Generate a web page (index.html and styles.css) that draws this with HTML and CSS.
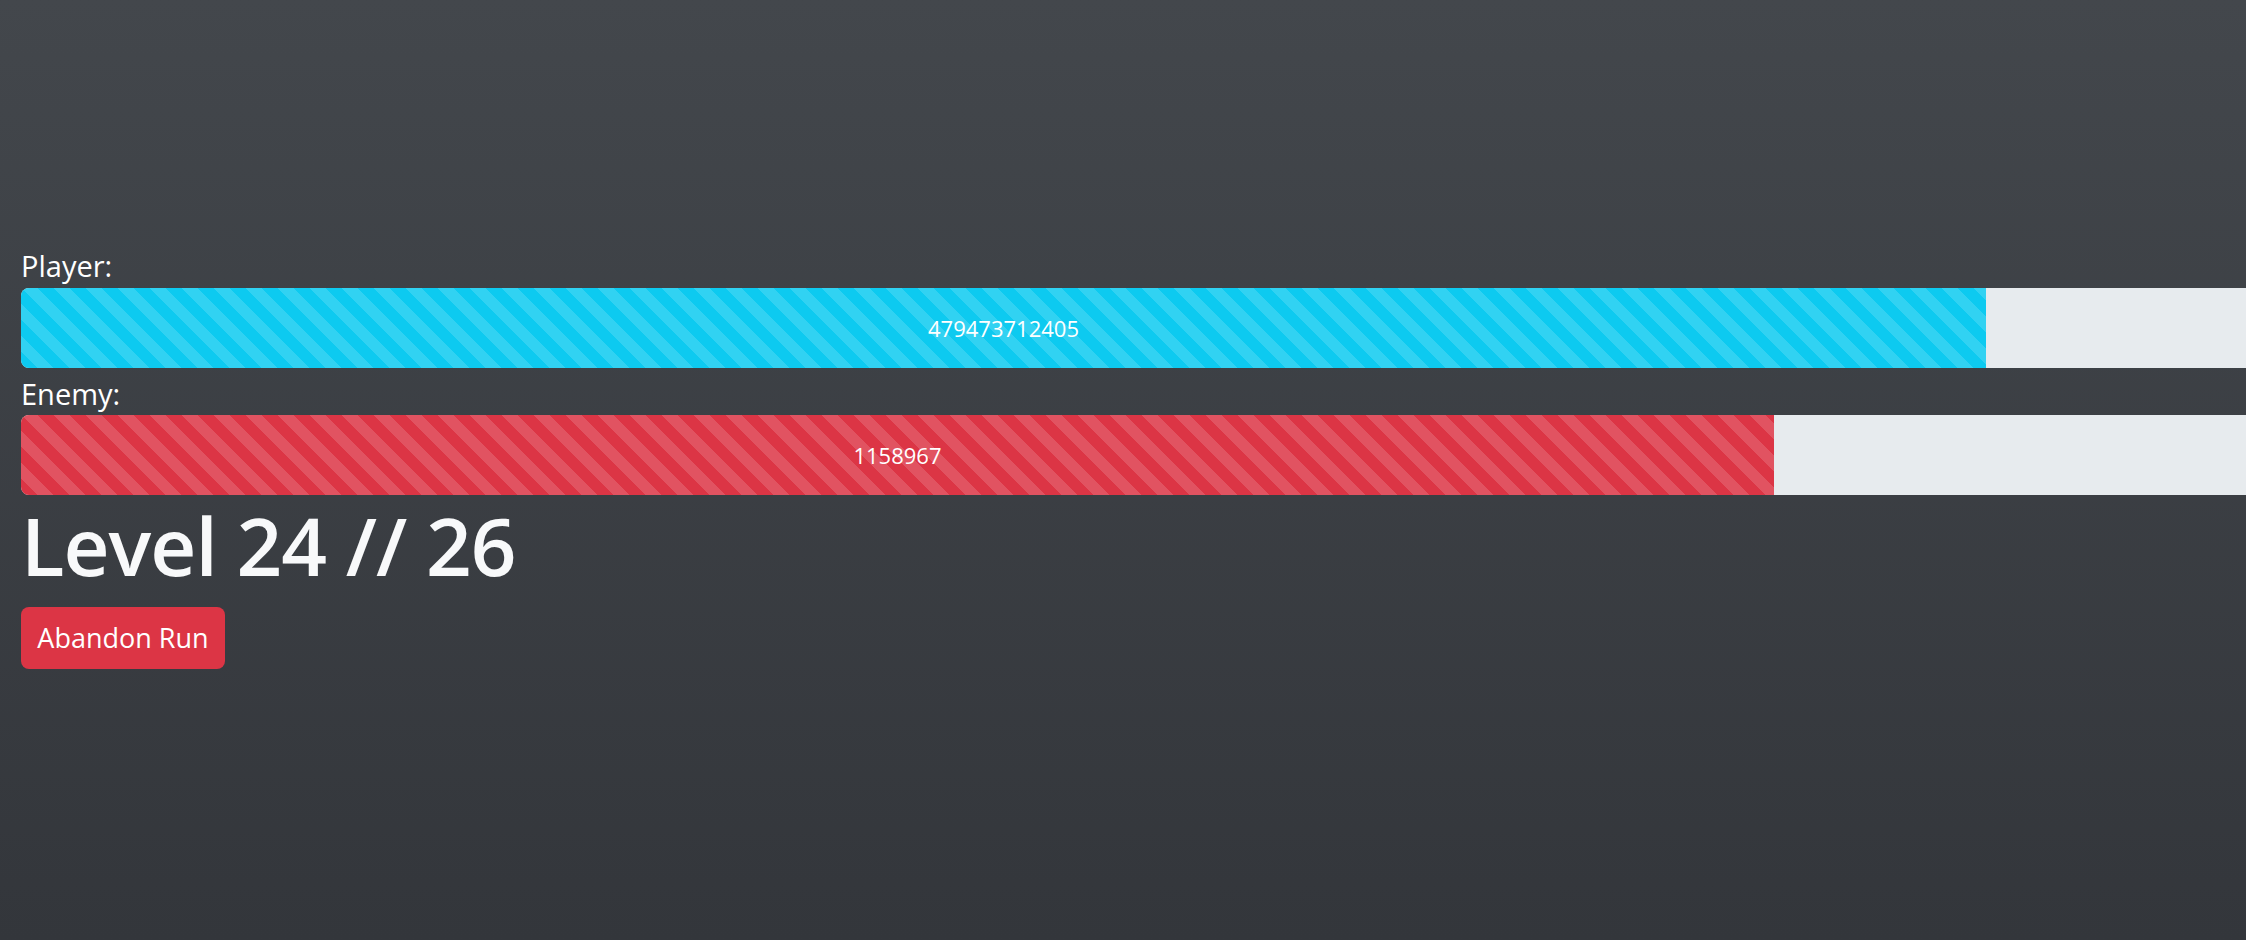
FILE: index.html
```html
<!DOCTYPE html>
<html lang="en">
<head>
<meta charset="utf-8">
<title>Run</title>
<link rel="stylesheet" href="styles.css">
</head>
<body>
<main class="game">
  <section class="meter">
    <div class="meter-label">Player:</div>
    <div class="track">
      <div class="fill fill-info" style="width: 88%">479473712405</div>
    </div>
  </section>
  <section class="meter">
    <div class="meter-label">Enemy:</div>
    <div class="track">
      <div class="fill fill-danger" style="width: 78.5%">1158967</div>
    </div>
  </section>
  <h1 class="level">Level 24 // 26</h1>
  <button class="btn-danger" type="button">Abandon Run</button>
</main>
</body>
</html>
```

FILE: styles.css
```css
html {
  overflow: hidden;
}
body {
  margin: 0;
  min-height: 940px;
  background: linear-gradient(180deg, #43474c 0%, #33363b 100%);
  font-family: "Open Sans", "Noto Sans", sans-serif;
  color: #fff;
}
.game {
  padding: 244px 0 0 21px;
  display: flex;
  flex-direction: column;
  align-items: flex-start;
}
.meter {
  align-self: stretch;
  margin-bottom: 4px;
}
.meter-label {
  font-size: 29px;
  line-height: 1.5;
  color: #fff;
}
.track {
  height: 80px;
  width: calc(100% + 8px);
  background: #e7ebee;
  border-radius: 8px;
  overflow: hidden;
  display: flex;
}
.fill {
  height: 100%;
  display: flex;
  align-items: center;
  justify-content: center;
  font-size: 22px;
  color: #fff;
  white-space: nowrap;
  background-image: linear-gradient(45deg,
    rgba(255,255,255,.15) 25%, transparent 25%,
    transparent 50%, rgba(255,255,255,.15) 50%,
    rgba(255,255,255,.15) 75%, transparent 75%, transparent);
  background-size: 32px 32px;
}
.fill-info {
  background-color: #0dcaf0;
}
.fill-danger {
  background-color: #dc3545;
}
.level {
  margin: -4px 0 12px 0;
  font-size: 80px;
  line-height: 100px;
  font-weight: 600;
  letter-spacing: -1px;
  color: #f8f9fa;
}
.btn-danger {
  font-family: inherit;
  font-size: 27px;
  line-height: 1.5;
  height: 62px;
  width: 204px;
  padding: 0;
  border: none;
  border-radius: 8px;
  background: #dc3545;
  color: #fff;
}
```
